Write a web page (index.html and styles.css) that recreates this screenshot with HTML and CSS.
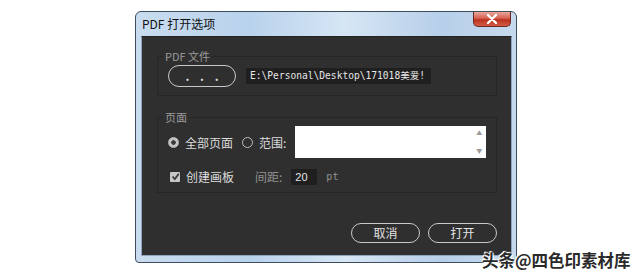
FILE: index.html
```html
<!DOCTYPE html>
<html>
<head>
  <title>PDF 打开选项</title>
  <link rel="stylesheet" href="styles.css">
</head>
<body>
  <div class="window">
    <div class="titlebar">
      <span class="title">PDF 打开选项</span>
      <span class="close">
        <svg width="12" height="10" viewBox="0 0 12 10"><path d="M2 1 L10 9 M10 1 L2 9" stroke="#fff" stroke-width="2.4" stroke-linecap="round"/></svg>
      </span>
    </div>
    <div class="content">
      <fieldset class="group">
        <legend>PDF 文件</legend>
        <div class="row">
          <button class="pill browse">. . .</button>
          <div class="path">E:\Personal\Desktop\171018美爱!</div>
        </div>
      </fieldset>

      <fieldset class="group pages">
        <legend>页面</legend>
        <div class="row">
          <label class="radio"><span class="dot checked"></span>全部页面</label>
          <label class="radio second"><span class="dot"></span>范围:</label>
          <div class="range">
            <span class="spin">&#9650;</span>
            <span class="spin">&#9660;</span>
          </div>
        </div>
        <div class="row">
          <label class="check">
            <span class="box"><svg width="9" height="9" viewBox="0 0 9 9"><path d="M1.5 4.5 L3.8 7 L7.8 1.8" stroke="#3a3a3a" stroke-width="1.8" fill="none"/></svg></span>
            创建画板
          </label>
          <span class="muted gap">间距:</span>
          <span class="num">20</span>
          <span class="muted unit">pt</span>
        </div>
      </fieldset>

      <div class="actions">
        <button class="pill">取消</button>
        <button class="pill">打开</button>
      </div>
    </div>
  </div>
  <div class="watermark">头条@四色印素材库</div>
</body>
</html>
```

FILE: styles.css
```css
body {
  margin: 0;
  padding-top: 11px;
  background-color: #fff;
  font-family: "Noto Sans CJK SC", "Noto Sans", sans-serif;
  font-size: 12px;
  position: relative;
  height: 274px;
  box-sizing: border-box;
  overflow: hidden;
}

.window {
  width: 380px;
  height: 250px;
  margin-left: 135px;
  border: 1px solid #3e4d5e;
  border-radius: 6px 6px 4px 4px;
  background: linear-gradient(90deg, #c9dcef 0%, #b9d2ec 30%, #d6e6f5 55%, #b7cfe9 80%, #c6daee 100%);
  display: flex;
  flex-direction: column;
}

.titlebar {
  height: 24px;
  display: flex;
  justify-content: space-between;
  align-items: flex-start;
  padding: 0 5px 0 6px;
}

.title {
  line-height: 24px;
  color: #111;
  font-size: 12px;
}

.close {
  width: 38px;
  height: 15px;
  border: 1px solid #6a2a22;
  border-top: none;
  border-radius: 0 0 5px 5px;
  box-sizing: border-box;
  background: linear-gradient(#e9a79c, #d5604f 45%, #bc3320 55%, #d25a44);
  display: flex;
  align-items: center;
  justify-content: center;
}

.content {
  flex: 1;
  margin: 0 4px 6px 5px;
  background-color: #2f2f2f;
  border: 1px solid #8ea5bd;
  border-top-color: #222;
  padding: 11px 14px 0 15px;
  color: #dcdcdc;
  display: flex;
  flex-direction: column;
}

.group {
  margin: 0;
  padding: 1px 0 8px 10px;
  border: 1px solid #262626;
}

.group legend {
  margin-left: -5px;
  padding: 0 2px;
  color: #9c9c9c;
  font-size: 11px;
  line-height: 16px;
}

.pages {
  margin-top: 13px;
  padding-bottom: 7px;
}

.row {
  display: flex;
  align-items: center;
}

.pages .row + .row {
  margin-top: 10px;
}

.pill {
  font-family: inherit;
  font-size: 12px;
  color: #e2e2e2;
  background: transparent;
  border: 1.5px solid #c9c9c9;
  border-radius: 11px;
  height: 20px;
  width: 69px;
  padding: 0;
  line-height: 16px;
}

.browse {
  height: 22px;
  width: 68px;
  letter-spacing: 4px;
  font-weight: bold;
  padding-left: 4px;
}

.path {
  margin-left: 10px;
  width: 185px;
  height: 16px;
  line-height: 16px;
  background-color: #1f1f1f;
  color: #e6e6e6;
  font-family: "DejaVu Sans Mono", "Noto Sans CJK SC", monospace;
  font-size: 9.6px;
  padding-left: 4px;
  box-sizing: border-box;
  white-space: nowrap;
  overflow: hidden;
}

.radio, .check {
  display: flex;
  align-items: center;
  gap: 6px;
}

.second {
  margin-left: 9px;
}

.dot {
  width: 11px;
  height: 11px;
  border-radius: 50%;
  border: 1px solid #bdbdbd;
  box-sizing: border-box;
}

.dot.checked {
  background: radial-gradient(circle, #3a3a3a 0 2px, #c4c4c4 2.5px);
}

.range {
  margin-left: 9px;
  width: 191px;
  height: 32px;
  background-color: #fff;
  display: flex;
  flex-direction: column;
  align-items: flex-end;
  justify-content: space-between;
  padding: 3px 4px;
  box-sizing: border-box;
}

.spin {
  color: #9a9a9a;
  font-size: 6px;
  line-height: 8px;
}

.box {
  width: 10px;
  height: 10px;
  margin-left: 2px;
  background-color: #c8c8c8;
  border-radius: 1px;
  display: flex;
  align-items: center;
  justify-content: center;
}

.muted {
  color: #8f8f8f;
}

.gap {
  margin-left: 21px;
}

.num {
  margin-left: 9px;
  width: 26px;
  height: 16px;
  line-height: 16px;
  background-color: #1f1f1f;
  color: #e6e6e6;
  padding-left: 4px;
  box-sizing: border-box;
  font-family: "Liberation Sans", sans-serif;
  font-size: 11px;
}

.unit {
  margin-left: 9px;
  font-family: "DejaVu Sans Mono", monospace;
  font-size: 10px;
}

.actions {
  margin-top: 30px;
  display: flex;
  justify-content: flex-end;
  gap: 8px;
}

.watermark {
  position: absolute;
  left: 482px;
  top: 248px;
  font-size: 16.5px;
  font-weight: 700;
  color: #2a2a2a;
  white-space: nowrap;
  text-shadow: 0 0 2px #fff, 0 0 2px #fff, 1px 1px 0 #fff, -1px -1px 0 #fff;
}
```
